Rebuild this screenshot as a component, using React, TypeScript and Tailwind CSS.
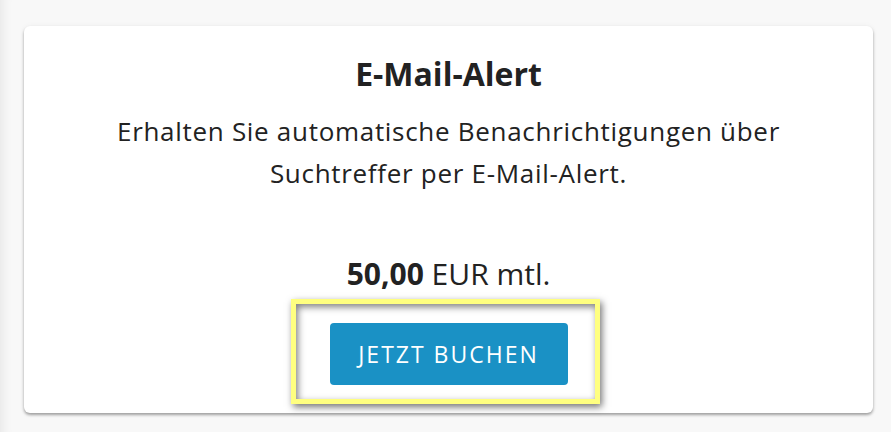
export default function App() {
  return (
    <div
      className="min-h-screen w-full bg-[#f8f8f8] pt-[26px] pl-[24px] pr-[18px] pb-4 shadow-[inset_14px_0_12px_-12px_rgba(0,0,0,0.08)]"
      style={{ fontFamily: '"Open Sans", "Noto Sans", sans-serif' }}
    >
      {/* Product card */}
      <div className="flex h-[387px] w-[849px] flex-col items-center rounded-[6px] bg-white text-center text-[#222] shadow-[0_2px_3px_rgba(0,0,0,0.35),0_0_6px_rgba(0,0,0,0.04)]">
        <h2 className="mt-[28px] text-[32px] font-bold leading-[40px]">E-Mail-Alert</h2>
        <p className="mt-[16px] w-[720px] text-[26px] leading-[42px] tracking-[0.7px]">
          Erhalten Sie automatische Benachrichtigungen über Suchtreffer per E-Mail-Alert.
        </p>

        <div className="mt-[60px] text-[30px] leading-[40px]">
          <span className="font-bold">50,00</span> EUR mtl.
        </div>

        {/* Highlighted call to action */}
        <div className="relative mt-[5px] -ml-[6px] flex h-[105px] w-[309px] items-start justify-center pt-[24px] pl-[6px]">
          <div className="absolute inset-0 border-[5px] border-[#ffff80] shadow-[2px_3px_7px_rgba(0,0,0,0.55),inset_2px_3px_7px_rgba(0,0,0,0.5)]"></div>
          <button className="relative h-[62px] w-[238px] rounded-[4px] bg-[#1a91c5] text-[23px] tracking-[2px] text-white">
            JETZT BUCHEN
          </button>
        </div>
      </div>
    </div>
  );
}
